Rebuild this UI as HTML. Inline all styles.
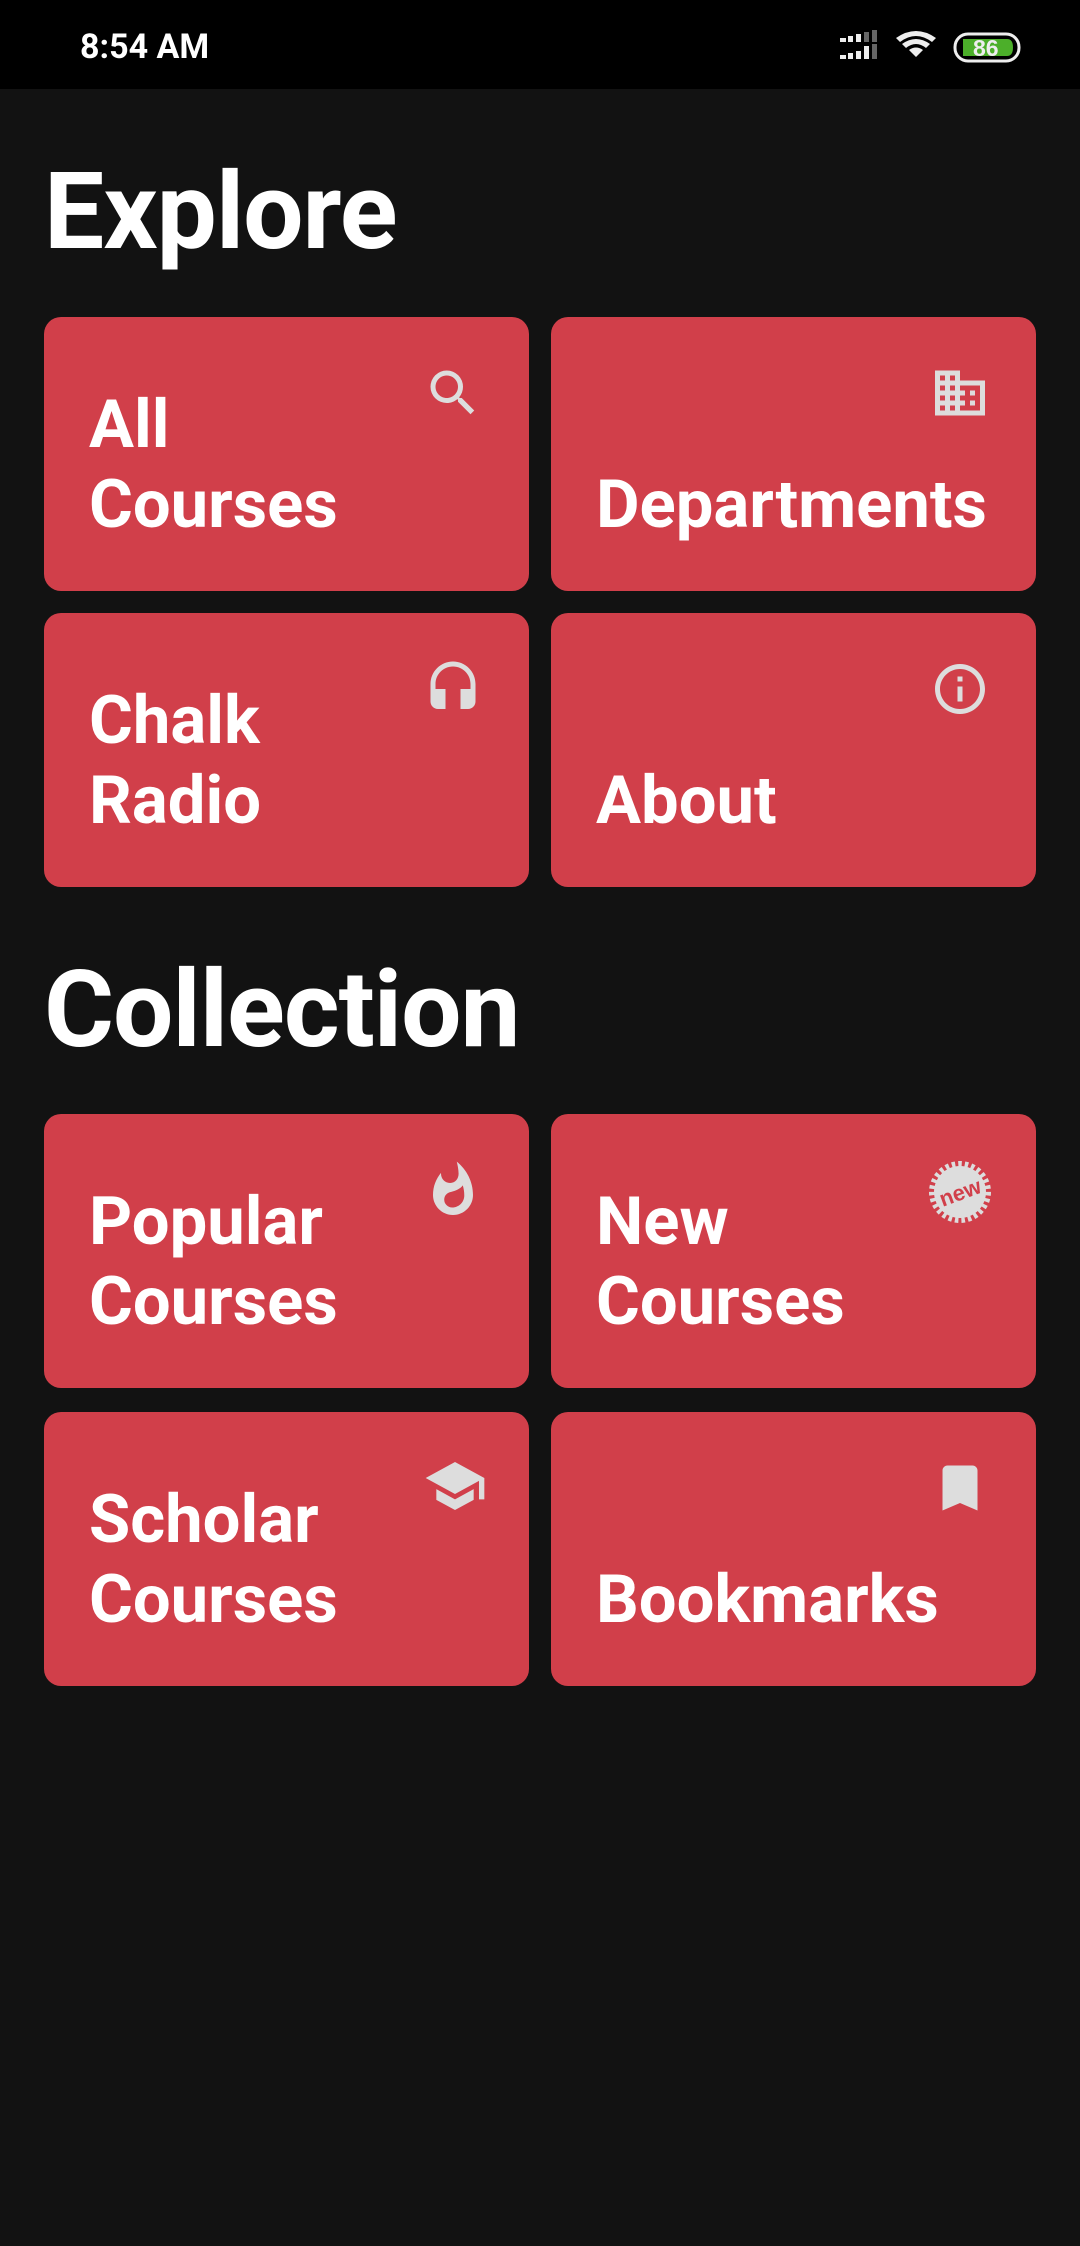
<!DOCTYPE html>
<html><head><meta charset="utf-8"><style>
*{margin:0;padding:0;box-sizing:border-box}
body{width:1080px;height:2246px;background:#121212;font-family:"Roboto","Liberation Sans",sans-serif;color:#fff;position:relative;overflow:hidden}
.sb{position:absolute;left:0;top:0;width:1080px;height:89px;background:#000}
.time{position:absolute;left:80px;top:27px;font-size:34px;font-weight:bold;color:#fff}
h1{position:absolute;left:44px;font-size:107px;font-weight:bold;letter-spacing:-1px;line-height:1}
.card{position:absolute;width:485px;height:274px;background:#d13f4a;border-radius:17px}
.card .t{position:absolute;left:45px;bottom:46px;font-size:67px;font-weight:bold;line-height:80px}
.card svg{position:absolute;right:46px;top:46px;width:60px;height:60px;fill:#ddd}
.c1{left:44px}.c2{left:551px}
</style></head><body>
<div class="sb"><div class="time">8:54 AM</div>
<svg style="position:absolute;left:836px;top:30px" width="190" height="36" viewBox="0 0 190 36">
<g fill="#eee"><rect x="4" y="8" width="6" height="4"/><rect x="12" y="6" width="5" height="6"/><rect x="20" y="4" width="5" height="8"/><rect x="4" y="25" width="6" height="4"/><rect x="12" y="23" width="5" height="6"/><rect x="20" y="21" width="5" height="8"/><rect x="28" y="16" width="5" height="13"/></g>
<g fill="#666"><rect x="28" y="2" width="5" height="10"/><rect x="36" y="0" width="5" height="12"/><rect x="36" y="14" width="5" height="15"/></g>
<path d="M60 8 Q80 -6 100 8 L96 12 Q80 0 64 12Z M66 14 Q80 4 94 14 L90 18 Q80 10 70 18Z M73 20 Q80 15 87 20 L80 27Z" fill="#eee"/>
<rect x="119" y="4" width="64" height="27" rx="13" fill="none" stroke="#eee" stroke-width="3"/>
<path d="M127 9 H171 Q177 9 177 17.5 Q177 26 171 26 H127Z" fill="#4caf2a"/>
<text x="137" y="26" font-family="Liberation Sans" font-size="23" font-weight="bold" fill="#eee">86</text>
</svg></div>
<h1 style="top:159px">Explore</h1>
<div class="card c1" style="top:317px"><div class="t">All<br>Courses</div><svg viewBox="0 0 24 24"><path d="M15.5 14h-.79l-.28-.27A6.47 6.47 0 0 0 16 9.5 6.5 6.5 0 1 0 9.5 16c1.61 0 3.09-.59 4.23-1.57l.27.28v.79l5 4.99L20.49 19l-4.99-5zm-6 0C7.01 14 5 11.99 5 9.5S7.01 5 9.5 5 14 7.01 14 9.5 11.99 14 9.5 14z"/></svg></div>
<div class="card c2" style="top:317px"><div class="t">Departments</div><svg viewBox="0 0 24 24"><path d="M12 7V3H2v18h20V7H12zM6 19H4v-2h2v2zm0-4H4v-2h2v2zm0-4H4V9h2v2zm0-4H4V5h2v2zm4 12H8v-2h2v2zm0-4H8v-2h2v2zm0-4H8V9h2v2zm0-4H8V5h2v2zm10 12h-8v-2h2v-2h-2v-2h2v-2h-2V9h8v10zm-2-8h-2v2h2v-2zm0 4h-2v2h2v-2z"/></svg></div>
<div class="card c1" style="top:613px"><div class="t">Chalk<br>Radio</div><svg viewBox="0 0 24 24"><path d="M12 1c-4.97 0-9 4.03-9 9v7c0 1.66 1.34 3 3 3h3v-8H5v-2c0-3.87 3.13-7 7-7s7 3.13 7 7v2h-4v8h3c1.66 0 3-1.34 3-3v-7c0-4.97-4.03-9-9-9z"/></svg></div>
<div class="card c2" style="top:613px"><div class="t">About</div><svg viewBox="0 0 24 24"><path d="M11 7h2v2h-2zm0 4h2v6h-2zm1-9C6.48 2 2 6.48 2 12s4.48 10 10 10 10-4.48 10-10S17.52 2 12 2zm0 18c-4.41 0-8-3.59-8-8s3.59-8 8-8 8 3.59 8 8-3.59 8-8 8z"/></svg></div>
<h1 style="top:957px">Collection</h1>
<div class="card c1" style="top:1114px"><div class="t">Popular<br>Courses</div><svg viewBox="0 0 24 24"><path d="M13.5.67s.74 2.65.74 4.8c0 2.06-1.35 3.73-3.41 3.73-2.07 0-3.63-1.67-3.63-3.73l.03-.36C5.21 7.51 4 10.62 4 14c0 4.42 3.58 8 8 8s8-3.58 8-8C20 8.61 17.41 3.8 13.5.67zM11.71 19c-1.78 0-3.22-1.4-3.22-3.14 0-1.62 1.05-2.76 2.81-3.12 1.77-.36 3.6-1.21 4.62-2.58.39 1.29.59 2.65.59 4.04 0 2.65-2.15 4.8-4.8 4.8z"/></svg></div>
<div class="card c2" style="top:1114px"><div class="t">New<br>Courses</div>
<svg viewBox="0 0 64 64" style="width:64px;height:64px;right:44px;top:46px"><circle cx="32" cy="32" r="26"/><circle cx="32" cy="32" r="28" fill="none" stroke="#ddd" stroke-width="6" stroke-dasharray="3.5 3"/><text x="32" y="40" text-anchor="middle" transform="rotate(-20 32 32)" font-family="Liberation Sans" font-weight="bold" font-size="22" fill="#d13f4a">new</text></svg></div>
<div class="card c1" style="top:1412px"><div class="t">Scholar<br>Courses</div><svg viewBox="0 0 24 24" style="right:42px;width:64px;height:64px;top:42px"><path d="M5 13.18v4L12 21l7-3.82v-4L12 17l-7-3.82zM12 3L1 9l11 6 9-4.91V17h2V9L12 3z"/></svg></div>
<div class="card c2" style="top:1412px"><div class="t">Bookmarks</div><svg viewBox="0 0 24 24"><path d="M17 3H7c-1.1 0-1.99.9-1.99 2L5 21l7-3 7 3V5c0-1.1-.9-2-2-2z"/></svg></div>
</body></html>
